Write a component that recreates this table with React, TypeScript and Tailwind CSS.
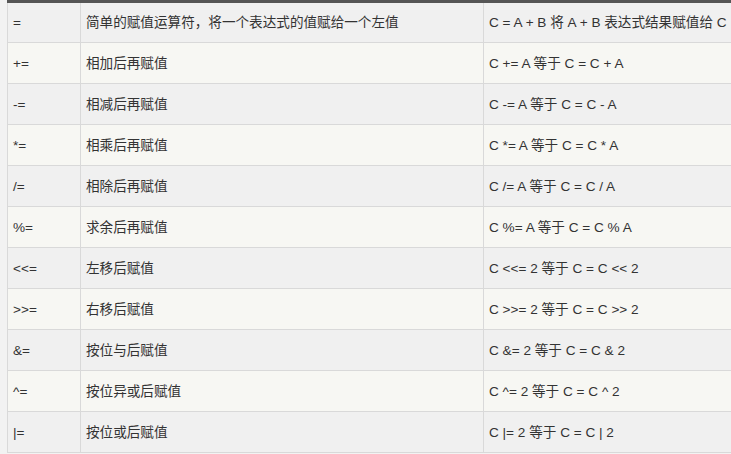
const rows = [
  ["=", "简单的赋值运算符，将一个表达式的值赋给一个左值", "C = A + B 将 A + B 表达式结果赋值给 C"],
  ["+=", "相加后再赋值", "C += A 等于 C = C + A"],
  ["-=", "相减后再赋值", "C -= A 等于 C = C - A"],
  ["*=", "相乘后再赋值", "C *= A 等于 C = C * A"],
  ["/=", "相除后再赋值", "C /= A 等于 C = C / A"],
  ["%=", "求余后再赋值", "C %= A 等于 C = C % A"],
  ["<<=", "左移后赋值", "C <<= 2 等于 C = C << 2"],
  [">>=", "右移后赋值", "C >>= 2 等于 C = C >> 2"],
  ["&=", "按位与后赋值", "C &= 2 等于 C = C & 2"],
  ["^=", "按位异或后赋值", "C ^= 2 等于 C = C ^ 2"],
  ["|=", "按位或后赋值", "C |= 2 等于 C = C | 2"],
]

export default function App() {
  return (
    <div
      className="h-[454px] w-[731px] overflow-hidden bg-[#f2f2f2] pl-[7px] text-[13.6px] text-[#333]"
      style={{ fontFamily: '"Liberation Sans", "Noto Sans CJK SC", sans-serif' }}
    >
      <table className="w-[780px] table-fixed border-collapse border-t-[3px] border-t-[#555]">
        <colgroup>
          <col className="w-[73px]" />
          <col className="w-[403px]" />
          <col />
        </colgroup>
        <tbody>
          {rows.map((r, i) => (
            <tr key={i} className={i % 2 === 0 ? "bg-[#f0f0f0]" : "bg-[#f7f7f3]"}>
              {r.map((c, j) => (
                <td
                  key={j}
                  className="h-[41px] border border-[#d9d9d9] pl-[5px] pt-[2px] align-middle whitespace-nowrap"
                >
                  {c}
                </td>
              ))}
            </tr>
          ))}
        </tbody>
      </table>
    </div>
  )
}
